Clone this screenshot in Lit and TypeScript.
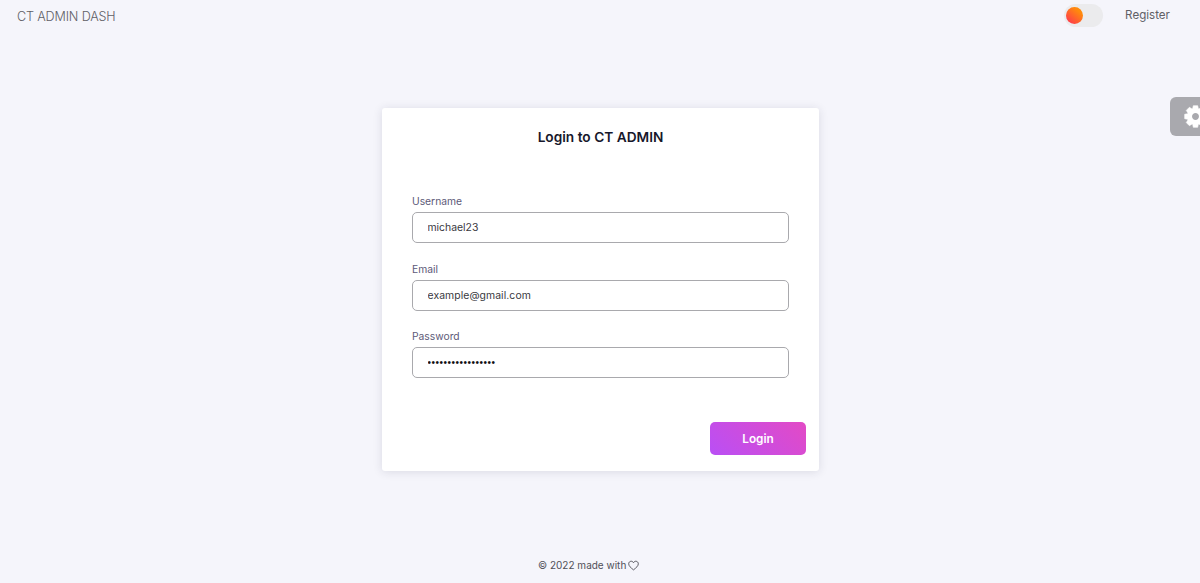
import { LitElement, css, html, svg } from "lit";
import { customElement, property, state } from "lit/decorators.js";
import { classMap } from "lit/directives/class-map.js";

@customElement("ct-field")
export class CtField extends LitElement {
  @property() label = "";
  @property() type = "text";
  @property() value = "";

  static styles = css`
    :host {
      display: block;
    }

    .label {
      display: block;
      height: 16px;
      margin-bottom: 3px;
      color: #5d5a78;
      font-size: 10.3px;
      line-height: 16px;
    }

    .input {
      display: block;
      box-sizing: border-box;
      width: 100%;
      height: 31px;
      border: 1px solid #a9a9ad;
      border-radius: 5px;
      background: #fff;
      padding: 0 15px 0 14.5px;
      color: #38383e;
      font-family: inherit;
      font-size: 10.4px;
      outline: none;
    }

    .input[type="email"] {
      letter-spacing: 0.08px;
    }

    .input[type="password"] {
      color: #111;
      font-family: "Liberation Sans", sans-serif;
      font-size: 10px;
      letter-spacing: 0.5px;
    }
  `;

  render() {
    return html`
      <label>
        <span class="label">${this.label}</span>
        <input class="input" type=${this.type} .value=${this.value} />
      </label>
    `;
  }
}

@customElement("app-root")
export class AppRoot extends LitElement {
  @state() private dark = false;

  static styles = css`
    :host {
      display: flex;
      flex-direction: column;
      position: relative;
      box-sizing: border-box;
      height: 100vh;
      overflow: hidden;
      background: #f5f5fb;
      font-family: Inter, sans-serif;
    }

    .topbar {
      display: flex;
      align-items: center;
      height: 30px;
      padding: 0 30px 0 17px;
      color: #606066;
    }

    .brand {
      margin-top: 3px;
      font-size: 12.6px;
      font-weight: 300;
      letter-spacing: -0.15px;
    }

    .toggle {
      display: flex;
      box-sizing: border-box;
      width: 39px;
      height: 23px;
      margin-left: auto;
      border: 0;
      border-radius: 12px;
      background: #ebebed;
      padding: 3px 2px 3px 2px;
      cursor: pointer;
    }

    .toggle.dark {
      justify-content: flex-end;
    }

    .knob {
      width: 17px;
      height: 17px;
      border-radius: 50%;
      background: linear-gradient(40deg, #ff2d57, #ff8a0c 75%);
    }

    .register {
      margin-left: 22px;
      color: inherit;
      font-size: 11.6px;
      text-decoration: none;
    }

    .card {
      display: flex;
      flex-direction: column;
      box-sizing: border-box;
      width: 437px;
      height: 363px;
      margin: 78px 0 0 382px;
      border-radius: 3px;
      background: #fff;
      box-shadow: 0 1px 10px rgba(40, 40, 70, 0.13);
    }

    .title {
      margin: 19px 0 46px;
      color: #17172b;
      font-size: 13.7px;
      font-weight: 600;
      line-height: 20px;
      text-align: center;
    }

    .fields {
      display: grid;
      gap: 17.5px;
      padding: 0 30px;
    }

    .login {
      align-self: flex-end;
      width: 96px;
      height: 33px;
      margin: auto 13px 16px 0;
      border: 0;
      border-radius: 5px;
      background: linear-gradient(45deg, #b94ff5, #e34ac5);
      color: #fff;
      font-family: inherit;
      font-size: 11.8px;
      font-weight: 600;
      cursor: pointer;
    }

    .footer {
      display: flex;
      align-items: center;
      gap: 2px;
      margin: auto 0 10px 538px;
      color: #505058;
      font-size: 10px;
      line-height: 16px;
    }

    .settings {
      position: absolute;
      top: 97px;
      right: 0;
      width: 30px;
      height: 39px;
      border: 0;
      border-radius: 6px 0 0 6px;
      background: #a9a9ae;
      padding: 0 0 1px;
      overflow: hidden;
      cursor: pointer;
    }

    .gear {
      display: block;
      margin-left: 13.5px;
    }
  `;

  private readonly toothAngles = [0, 45, 90, 135, 180, 225, 270, 315];

  private toggleTheme(): void {
    this.dark = !this.dark;
  }

  render() {
    return html`
      <header class="topbar">
        <span class="brand">CT ADMIN DASH</span>
        <button
          class=${classMap({ toggle: true, dark: this.dark })}
          @click=${this.toggleTheme}
        >
          <span class="knob"></span>
        </button>
        <a class="register" href="#">Register</a>
      </header>

      <main class="card">
        <h1 class="title">Login to CT ADMIN</h1>
        <div class="fields">
          <ct-field label="Username" value="michael23"></ct-field>
          <ct-field label="Email" type="email" value="example@gmail.com"></ct-field>
          <ct-field label="Password" type="password" value="passwordpassword1"></ct-field>
        </div>
        <button class="login">Login</button>
      </main>

      <footer class="footer">
        <span>© 2022 made with</span>
        <svg width="11" height="11" viewBox="0 0 24 24" fill="none" stroke="currentColor" stroke-width="2">
          <path d="M12 21.5C6 16.8 1.5 13 1.5 8.3C1.5 5 4 2.7 7 2.7C9.2 2.7 11 3.9 12 6C13 3.9 14.800 2.7 17 2.7C20 2.7 22.5 5 22.5 8.3C22.5 13 18 16.8 12 21.5Z" />
        </svg>
      </footer>

      <button class="settings">
        <svg class="gear" width="23" height="23" viewBox="-12 -12 24 24">
          <circle r="6.1" fill="none" stroke="#fff" stroke-width="5" />
          ${this.toothAngles.map(
            (angle) => svg`
              <path
                d="M-3.200 -7L-2.300 -11.300H2.300L3.200 -7Z"
                fill="#fff"
                stroke="#fff"
                stroke-width="0.6"
                stroke-linejoin="round"
                transform="rotate(${angle})"
              />
            `,
          )}
        </svg>
      </button>
    `;
  }
}

declare global {
  interface HTMLElementTagNameMap {
    "app-root": AppRoot;
    "ct-field": CtField;
  }
}
